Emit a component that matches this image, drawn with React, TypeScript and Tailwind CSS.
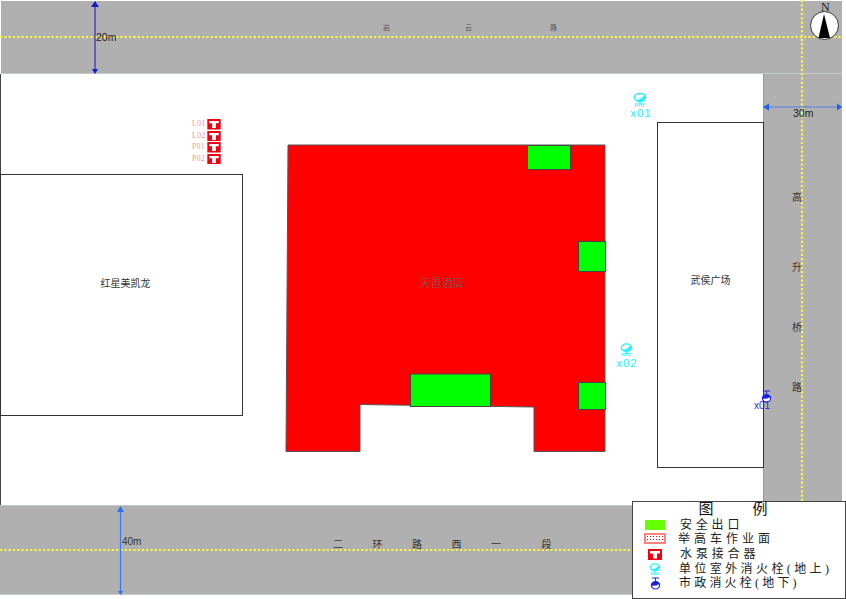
import React from "react";

const Pump = ({ className = "" }: { className?: string }) => (
  <svg viewBox="0 0 14 11" className={className}>
    <rect width="14" height="11" fill="#f00010" />
    <path d="M2 2H12V4.500H9V9.500H5V4.500H2Z" fill="#fff" />
  </svg>
);

const Hydrant = ({ className = "" }: { className?: string }) => (
  <svg viewBox="0 0 14 14" className={className} fill="none" stroke="#22eeff">
    <ellipse cx="7" cy="4.500" rx="5.500" ry="4" fill="#fff" strokeWidth="1.4" />
    <path d="M2 7Q8 7 11.500 2Q13.500 5.500 9.500 7.500Q5 9.500 2 7Z" fill="#22eeff" stroke="none" />
    <path d="M7 8V11M2 11H12" strokeWidth="1.1" />
    <path d="M2 12.800H12" strokeWidth="1.2" strokeDasharray="1 1" />
  </svg>
);

const CityHydrant = ({ className = "" }: { className?: string }) => (
  <svg viewBox="0 0 12 14" className={className} fill="none" stroke="#1a22e0">
    <path d="M2 1H10M6 1V4" strokeWidth="1.1" />
    <ellipse cx="6" cy="9" rx="4.500" ry="4" fill="#fff" strokeWidth="1.2" />
    <path d="M1.500 9.500Q6 10 10.500 7.500Q9.500 4.500 6 4.800Q2 5.500 1.500 9.500Z" fill="#1a22e0" stroke="none" />
  </svg>
);

const serif = "font-['Liberation_Serif','Noto_Sans_CJK_SC',serif]";
const sans = "font-['Liberation_Sans',sans-serif]";

const legendRows = [
  { label: "安全出口", tracking: "tracking-[3.800px]", pl: "pl-[3px]", h: "h-[13px]", icon: <div className="w-5 h-[10px] bg-[#66ff00]" /> },
  {
    label: "举高车作业面",
    tracking: "tracking-[4px]",
    pl: "pl-[1px]",
    h: "h-[15px]",
    icon: <div className="w-[22px] h-[11px] border-2 border-[#ff8080] [background-image:radial-gradient(#d01010_40%,transparent_45%)] [background-size:3px_3px]" />,
  },
  { label: "水泵接合器", tracking: "tracking-[3.900px]", pl: "pl-[3px]", h: "h-[16px]", icon: <Pump className="w-[18px] h-[11px]" /> },
  { label: "单位室外消火栓(地上)", tracking: "tracking-[3.400px]", pl: "pl-[2px]", h: "h-[14px]", icon: <Hydrant className="w-[12px] h-[13px]" /> },
  { label: "市政消火栓(地下)", tracking: "tracking-[3.200px]", pl: "pl-[2px]", h: "h-[14px]", icon: <CityHydrant className="w-[11px] h-[13px]" /> },
];

export default function App() {
  return (
    <div className={`relative w-[846px] h-[599px] overflow-hidden bg-white ${serif}`}>
      {/* site ground */}
      <div className="absolute left-0 top-[74px] w-[763px] h-[431px] border-l border-[#444]" />

      {/* roads */}
      <div className="absolute left-[1px] top-[1px] w-[841px] h-[73px] bg-[#b0b0b0] border-b border-[#c4ccc8]" />
      <div className="absolute left-[763px] top-[74px] w-[79px] h-[432px] bg-[#b0b0b0] border-l border-[#9a9a9a]" />
      <div className="absolute left-0 top-[505px] w-[846px] h-[90px] bg-[#b0b0b0] border-y border-[#c4ccc8]" />

      {/* neighbouring buildings */}
      <div className="absolute left-0 top-[174px] w-[243px] h-[242px] bg-white border border-[#333] flex items-center justify-center pl-[8px] pb-[22px] text-[10px] leading-[12px] text-[#333]">
        红星美凯龙
      </div>
      <div className="absolute left-[657px] top-[122px] w-[107px] h-[346px] bg-white border border-[#333] flex items-center justify-center pb-[28px] text-[10px] leading-[12px] text-[#333]">
        武侯广场
      </div>

      {/* centre lines, plan shapes and dimension arrows */}
      <svg viewBox="0 0 846 599" className="absolute inset-0 w-[846px] h-[599px]">
        <g stroke="#f8f840" strokeWidth="2.200" strokeDasharray="2.200 2.100" fill="none">
          <path d="M0 37H842" />
          <path d="M802 0V505" />
          <path d="M0 550H633" />
        </g>
        <path d="M288 145H605V451.500H534V407L360 404.500V451.500H286Z" fill="#ff0000" stroke="#555" strokeWidth="1" />
        <g fill="#00ff00" stroke="#444" strokeWidth="1">
          <rect x="527.500" y="145.500" width="43" height="24" />
          <rect x="578.500" y="241.500" width="27" height="30" />
          <rect x="578.500" y="382.500" width="27" height="27" />
          <rect x="410.500" y="374" width="80" height="32.500" />
        </g>

        <path d="M95 2V72" stroke="#2a2ac0" strokeWidth="1.200" />
        <path d="M95 1L91 7H99Z M95 74L92 69H98Z" fill="#1a1ac8" />
        <path d="M120.500 507V594" stroke="#3a78f8" strokeWidth="1.200" />
        <path d="M120.500 506L117 512H124Z M120.500 595L118 591H123Z" fill="#3070f0" />
        <path d="M765 107H841" stroke="#5080e8" strokeWidth="1.200" />
        <path d="M763 107L769 103.500V110.500Z M842 107L837 103.500V110.500Z" fill="#2060f0" />

        <circle cx="824.500" cy="25.500" r="14" fill="#fff" stroke="#333" />
        <path d="M824 14L830 38H818.500Z" fill="#000" />
      </svg>

      {/* road names */}
      <div className="absolute left-[383px] top-[24px] flex gap-[75px] text-[7px] leading-[8px] text-[#555]">
        <span>岩</span>
        <span>云</span>
        <span className="ml-[3px]">路</span>
      </div>
      <div className="absolute left-[333px] top-[539px] flex gap-[29.500px] text-[10px] leading-[12px] text-[#333]">
        <span>二</span>
        <span>环</span>
        <span>路</span>
        <span>西</span>
        <span>一</span>
        <span className="ml-[11px]">段</span>
      </div>
      <div className="absolute left-[792px] top-[192px] flex flex-col gap-[48px] text-[10px] leading-[12px] text-[#333]">
        <span className="mb-[10px]">高</span>
        <span>升</span>
        <span>桥</span>
        <span>路</span>
      </div>

      <span className="absolute left-[821px] top-[1px] text-[12px] leading-[12px] text-[#222]">N</span>
      <span className="absolute left-[420px] top-[277px] text-[11px] leading-[12px] text-[#8c4a4a]">天邑酒店</span>

      <span className={`absolute left-[96px] top-[31px] ${sans} text-[10.500px] leading-[12px] text-[#222]`}>20m</span>
      <span className={`absolute left-[122px] top-[536px] ${sans} text-[10px] leading-[12px] text-[#333]`}>40m</span>
      <span className={`absolute left-[793px] top-[107px] ${sans} text-[10.500px] leading-[12px] text-[#222]`}>30m</span>

      {/* pump connectors */}
      <div className="absolute left-[192px] top-[119px] flex flex-col gap-px">
        {["L01", "L02", "P01", "P02"].map((t) => (
          <div key={t} className="flex items-center h-[10.500px] gap-[2px]">
            <span className="w-[13px] text-[7.500px] leading-[8px] tracking-[0.6px] text-[#ff8c8c]">{t}</span>
            <Pump className="w-[14px] h-[10.500px]" />
          </div>
        ))}
      </div>

      {/* hydrants */}
      <div className="absolute left-[630px] top-[93px] flex flex-col items-center w-[22px]">
        <Hydrant className="w-[14px] h-[14px] mr-[3px]" />
        <span className={`${sans} text-[11.500px] leading-[12px] tracking-[1px] text-[#22eeff]`}>x01</span>
      </div>
      <div className="absolute left-[616px] top-[343px] flex flex-col items-center w-[22px]">
        <Hydrant className="w-[13px] h-[14px] mr-[2px]" />
        <span className={`${sans} text-[11.500px] leading-[12px] tracking-[1px] text-[#22eeff]`}>x02</span>
      </div>
      <CityHydrant className="absolute left-[761px] top-[390px] w-[11px] h-[13px]" />
      <span className={`absolute left-[754px] top-[400px] ${sans} text-[10px] leading-[12px] text-[#2a2ae0]`}>x01</span>

      {/* legend */}
      <div className="absolute left-[632px] top-[501px] w-[214px] h-[98px] bg-white border border-[#444] flex flex-col">
        <div className="flex justify-center gap-[39px] h-[15px] pr-[12px] text-[15px] leading-[15px] text-[#111]">
          <span>图</span>
          <span>例</span>
        </div>
        <div className="flex flex-col pt-[1px]">
          {legendRows.map((r) => (
            <div key={r.label} className={`flex items-center ${r.h}`}>
              <div className="w-[44px] flex justify-center">{r.icon}</div>
              <span className={`${r.pl} text-[12px] leading-[14px] text-[#222] whitespace-nowrap ${r.tracking}`}>{r.label}</span>
            </div>
          ))}
        </div>
      </div>
    </div>
  );
}
